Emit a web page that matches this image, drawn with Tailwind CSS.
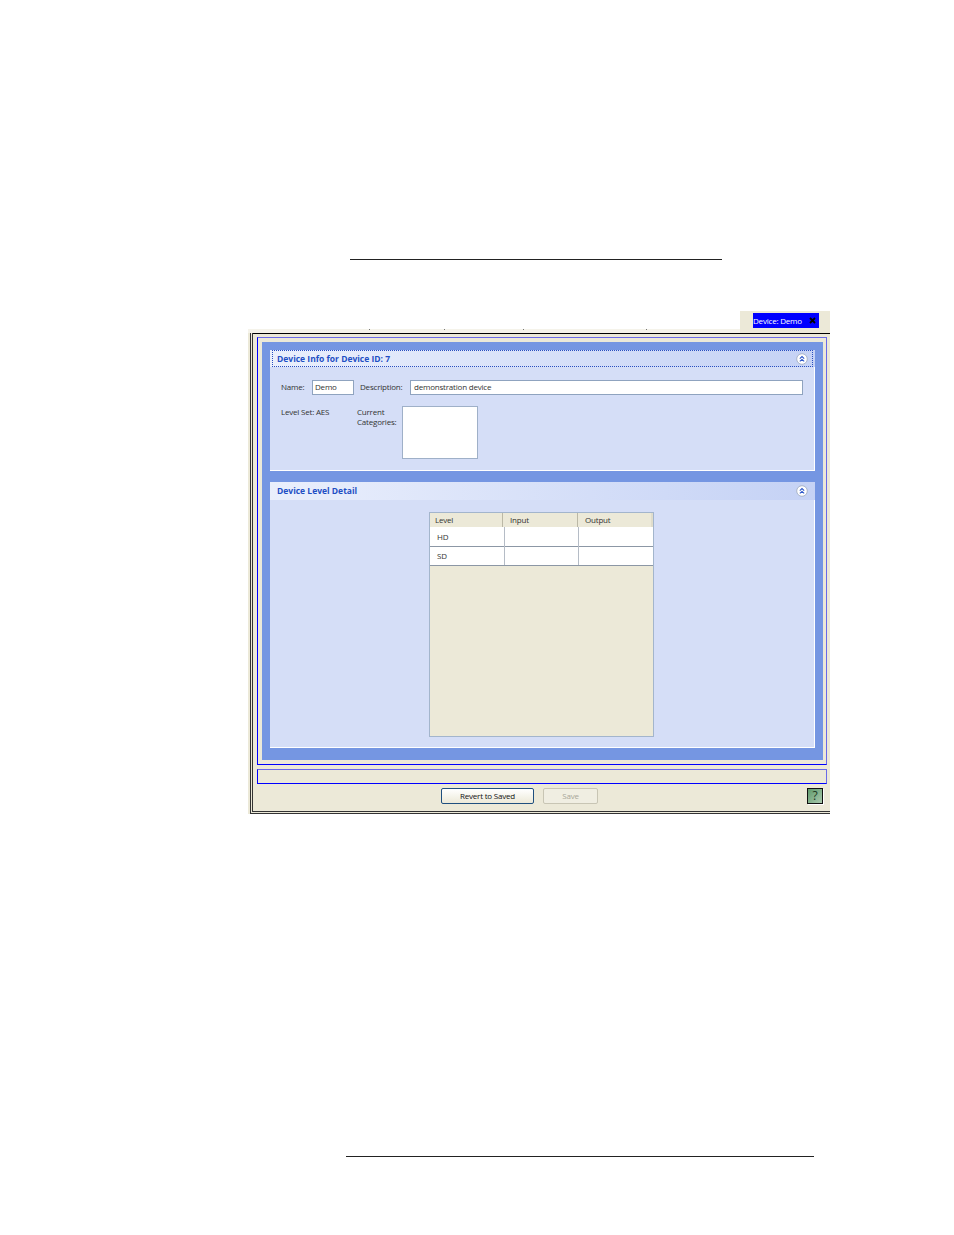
<!DOCTYPE html>
<html lang="en">
<head>
    <meta charset="UTF-8">
    <title>Device Info</title>
    <script src="https://cdn.jsdelivr.net/npm/@tailwindcss/browser@4"></script>
</head>
<body class="bg-white font-['Open_Sans',sans-serif] text-[8px] tracking-[-0.2px] text-[#333]">
    <div class="w-[954px] h-[1235px] overflow-hidden pt-[259px]">
        <!-- Top rule -->
        <div class="ml-[350px] w-[372px] h-px bg-[#222]"></div>

        <!-- Window -->
        <div class="ml-[248px] w-[582px] mt-[51px]">
            <!-- Tab row -->
            <div class="flex items-end h-[22px]">
                <div class="flex-1 h-[4px] bg-[#f5f3ea] relative">
                    <span class="absolute left-[121px] top-0 w-px h-px bg-[#777]"></span>
                    <span class="absolute left-[196px] top-0 w-px h-px bg-[#777]"></span>
                    <span class="absolute left-[275px] top-0 w-px h-px bg-[#777]"></span>
                    <span class="absolute left-[398px] top-0 w-px h-px bg-[#777]"></span>
                </div>
                <div class="w-[90px] h-[22px] bg-[#ece9d8] pl-[13px] pt-[2px]">
                    <div class="w-[66px] h-[15px] bg-[#0000ff] text-white flex items-center justify-between pr-[3px] leading-none whitespace-nowrap">
                        <span>Device: Demo</span>
                        <svg class="w-[7px] h-[7px]" viewBox="0 0 7 7"><path d="M1 1l5 5M6 1L1 6" stroke="#000" stroke-width="1.8"/></svg>
                    </div>
                </div>
            </div>

            <div class="bg-[#ece9d8] pl-[2px]">
                <div class="border-l-[3px] border-b-[3px] border-double border-[#333] pb-[7px]">
                    <div class="h-px bg-black"></div>

                    <div class="pl-[4px] pr-[3px] pt-[3px]">
                        <!-- Blue outlined area -->
                        <div class="border border-t-[#6a6ae8] border-r-[#6a6ae8] border-l-[#0000ff] border-b-[#0000ff] h-[428px] pl-[4px] pr-[3px] pt-[4px]">
                            <div class="bg-[#7596e2] h-[418px] p-[8px] pb-[12px] flex flex-col gap-[11px]">
                                <!-- Device info card -->
                                <div class="h-[121px] bg-[#d5def7] border-r border-b border-white">
                                    <div class="h-[17px] bg-gradient-to-r from-[#eaeffc] to-[#c5d2f5] px-[2px] -mr-px">
                                        <div class="h-[17px] border border-dotted border-[#2a4fc0] flex items-center justify-between pl-[4px] pr-[4px]">
                                            <span class="font-bold text-[8.5px] tracking-normal text-[#1f4fc4] pt-px">Device Info for Device ID: 7</span>
                                            <svg class="w-[12px] h-[12px] mt-px" viewBox="0 0 12 12"><circle cx="6" cy="6" r="5.3" fill="#fff" stroke="#a9b4c8"/><path d="M3.8 5.6L6 3.6l2.2 2M3.8 8.4L6 6.4l2.2 2" fill="none" stroke="#2a55c8" stroke-width="1.1"/></svg>
                                        </div>
                                    </div>
                                    <div class="flex items-start mt-[13px] pl-[11px] leading-[13px]">
                                        <span class="w-[31px]">Name:</span>
                                        <div class="w-[42px] h-[15px] bg-white border border-[#8fa3bf] pl-[2px] leading-[11px]">Demo</div>
                                        <span class="ml-[6px] w-[50px]">Description:</span>
                                        <div class="w-[393px] h-[15px] bg-white border border-[#8fa3bf] pl-[3px] leading-[11px]">demonstration device</div>
                                    </div>
                                    <div class="flex items-start mt-[11px] pl-[11px]">
                                        <span class="w-[76px]">Level Set: AES</span>
                                        <span class="w-[45px] leading-[10px] mt-px">Current Categories:</span>
                                        <div class="w-[76px] h-[53px] bg-white border border-[#9fb0c8]"></div>
                                    </div>
                                </div>

                                <!-- Device level card -->
                                <div class="flex-1 bg-[#d5def7] border-r border-b border-white">
                                    <div class="h-[18px] bg-gradient-to-r from-[#eaeffc] to-[#c5d2f5] -mr-px flex items-center justify-between pl-[7px] pr-[7px]">
                                        <span class="font-bold text-[8.5px] tracking-normal text-[#1f4fc4] pt-px">Device Level Detail</span>
                                        <svg class="w-[12px] h-[12px]" viewBox="0 0 12 12"><circle cx="6" cy="6" r="5.3" fill="#fff" stroke="#a9b4c8"/><path d="M3.8 5.6L6 3.6l2.2 2M3.8 8.4L6 6.4l2.2 2" fill="none" stroke="#2a55c8" stroke-width="1.1"/></svg>
                                    </div>
                                    <!-- Level table -->
                                    <div class="ml-[159px] mt-[12px] w-[225px] h-[225px] bg-[#ece9d8] border border-[#a3b5cc]">
                                        <div class="grid grid-cols-[73px_75px_1fr] h-[14px] leading-[13px] border-r-2 border-[#e0ddcc]">
                                            <div class="pl-[5px] border-r border-[#bbb8a6]">Level</div>
                                            <div class="pl-[7px] border-r border-[#bbb8a6]">Input</div>
                                            <div class="pl-[7px]">Output</div>
                                        </div>
                                        <div class="grid grid-cols-[75px_74px_1fr] h-[20px] leading-[20px] bg-white border-b border-[#8c97a5]">
                                            <div class="pl-[7px] border-r border-[#b5bcc6]">HD</div>
                                            <div class="border-r border-[#b5bcc6]"></div>
                                            <div></div>
                                        </div>
                                        <div class="grid grid-cols-[75px_74px_1fr] h-[19px] leading-[18px] bg-white border-b border-[#8c97a5]">
                                            <div class="pl-[7px] border-r border-[#b5bcc6]">SD</div>
                                            <div class="border-r border-[#b5bcc6]"></div>
                                            <div></div>
                                        </div>
                                    </div>
                                </div>
                            </div>
                        </div>

                        <!-- Status box -->
                        <div class="mt-[4px] h-[15px] border border-t-[#6a6ae8] border-r-[#6a6ae8] border-l-[#0000ff] border-b-[#0000ff]"></div>

                        <!-- Buttons -->
                        <div class="flex mt-[4px] h-[16px] pl-[184px] gap-[9px]">
                            <div class="w-[93px] h-[16px] rounded-[2px] border border-[#1f4f7f] bg-gradient-to-b from-white to-[#ece9d8] text-[#111] text-center leading-[13px]">Revert to Saved</div>
                            <div class="w-[55px] h-[16px] rounded-[2px] border border-[#c8c5b4] bg-[#f0eee2] text-[#a8a698] text-center leading-[13px]">Save</div>
                            <div class="ml-auto mr-[4px] w-[16px] h-[16px] border border-[#111] bg-gradient-to-br from-[#5f9a6c] to-[#a9c9ae] text-[#1d3a24] text-center text-[12px] leading-[14px] shadow-[1px_1px_0_#fff]">?</div>
                        </div>
                    </div>
                </div>
            </div>
        </div>

        <!-- Bottom rule -->
        <div class="ml-[346px] w-[468px] h-px bg-[#222] mt-[342px]"></div>
    </div>
</body>
</html>
